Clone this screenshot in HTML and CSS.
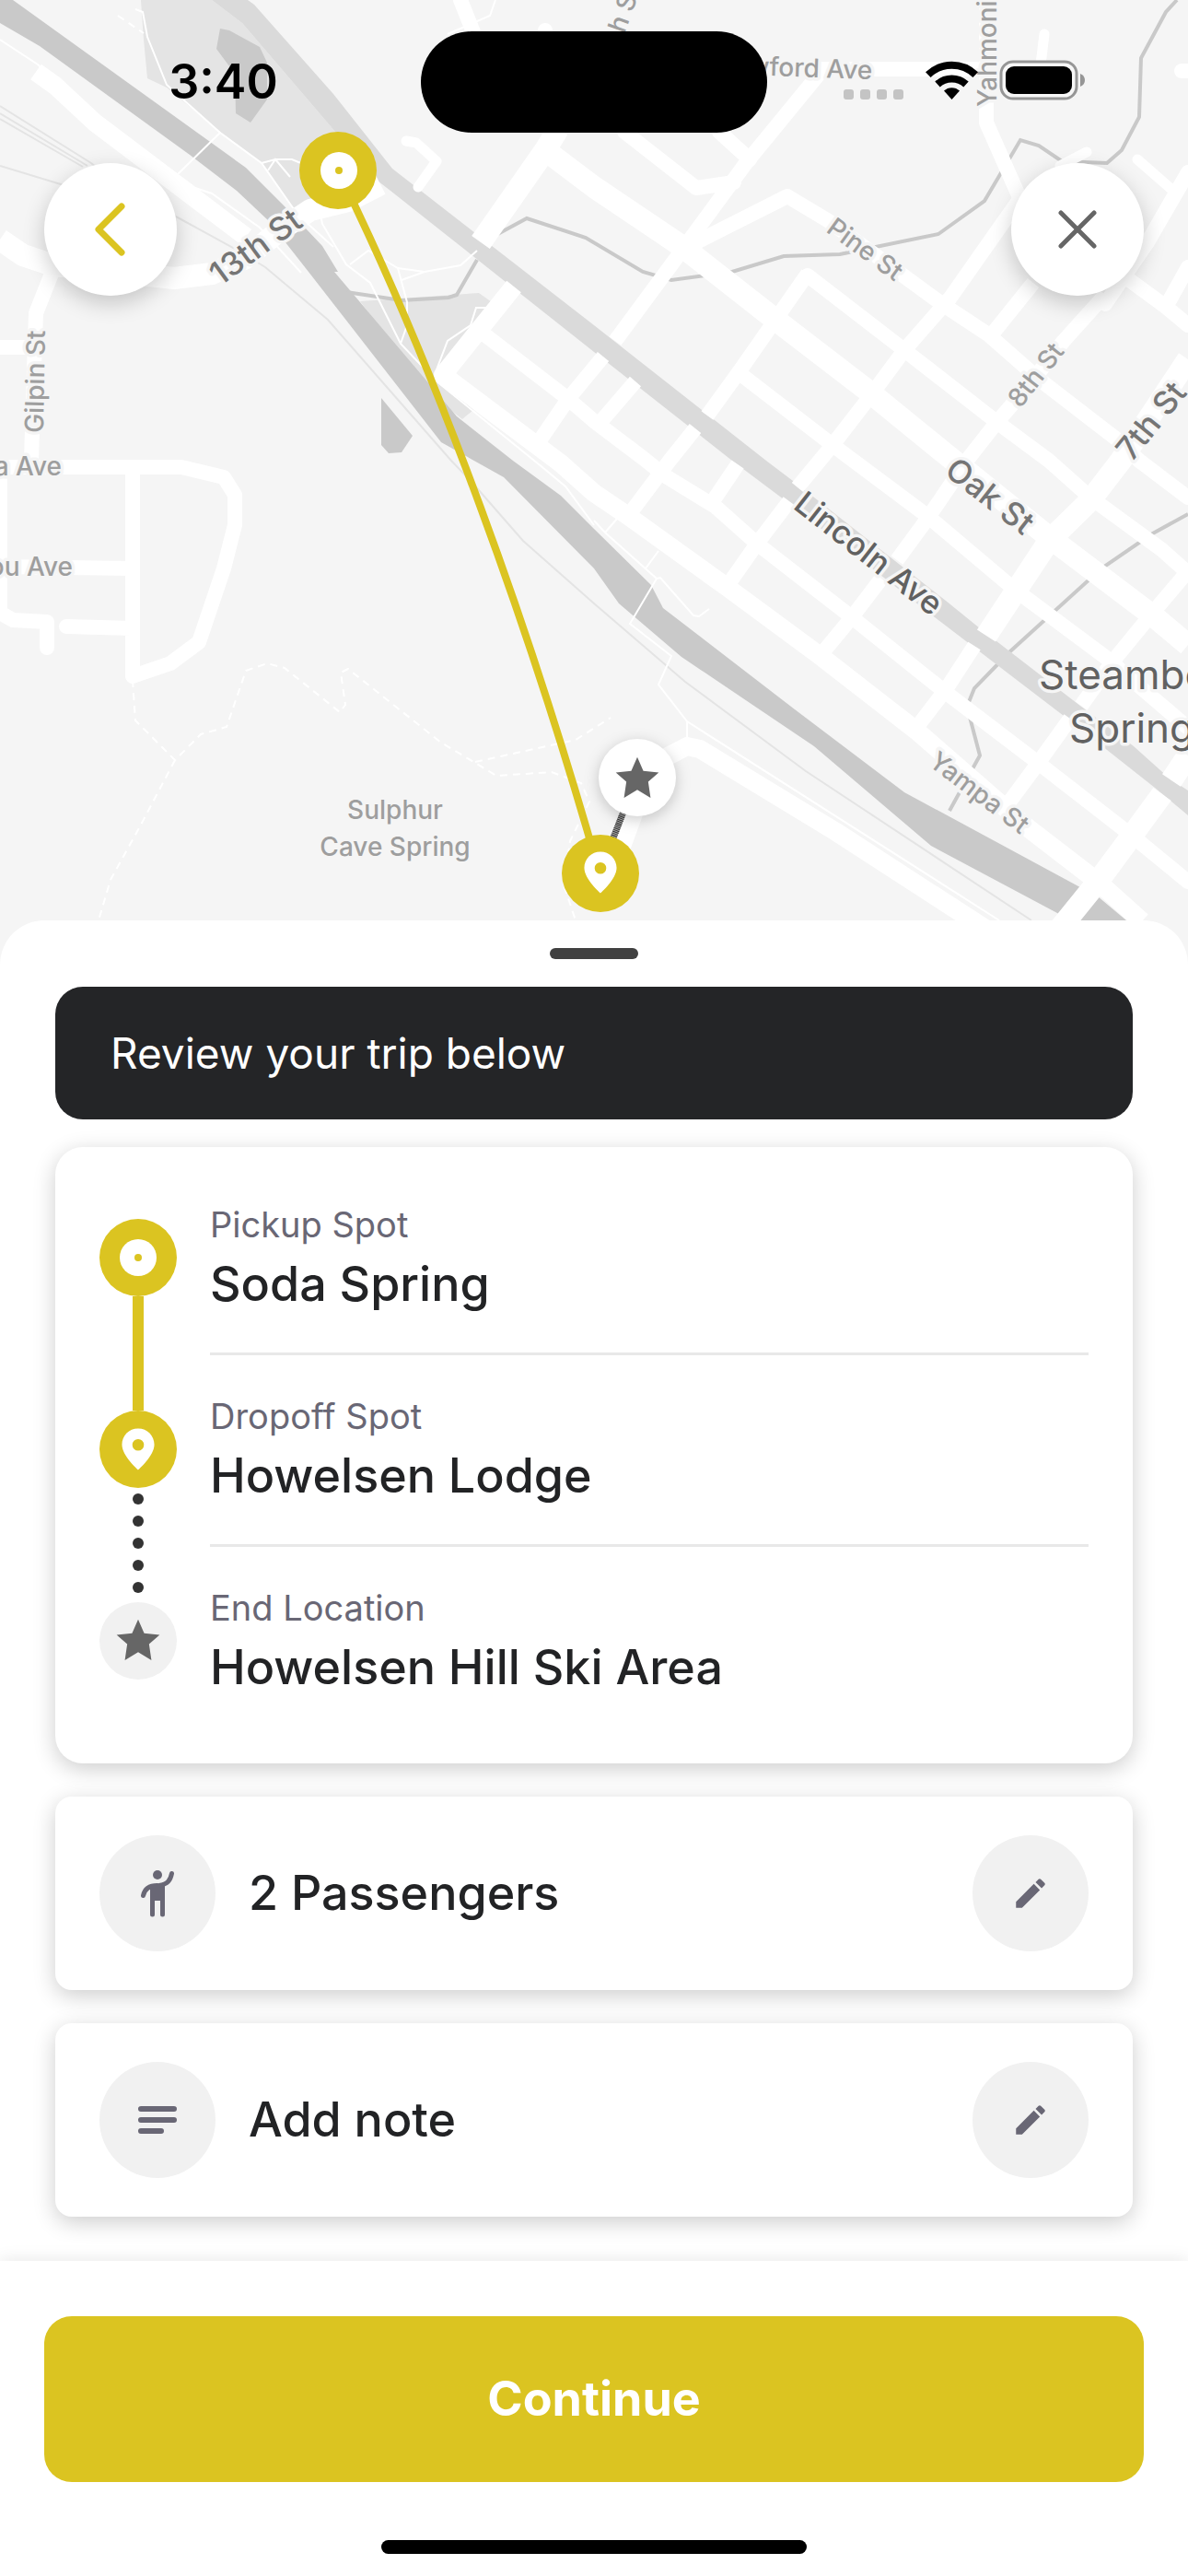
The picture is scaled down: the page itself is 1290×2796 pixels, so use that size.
FILE: index.html
```html
<!DOCTYPE html>
<html lang="en">
<head>
  <meta charset="UTF-8" />
  <meta name="viewport" content="width=device-width, initial-scale=1.0"/>
  <title>Review your trip</title>
  <link rel="stylesheet" href="styles.css">
</head>
<body>

  <!-- Shared icons -->
  <svg class="icon-defs" aria-hidden="true">
    <symbol id="icon-pin" viewBox="0 0 24 24">
      <path fill-rule="evenodd" d="M12 2C7.6 2 4.2 5.4 4.2 9.8 4.2 15.2 12 22 12 22s7.800-6.800 7.800-12.200C19.800 5.400 16.400 2 12 2zm0 5.100a2.800 2.800 0 1 1 0 5.600a2.800 2.800 0 0 1 0-5.600z"/>
    </symbol>
    <symbol id="icon-star" viewBox="0 0 24 24">
      <path d="M12 17.270L18.180 21l-1.100-7.500L22 9.240l-7.190-.8L12 2 9.190 8.440 2 9.240l4.920 4.260L5.820 21z"/>
    </symbol>
    <symbol id="icon-edit" viewBox="0 0 24 24">
      <path d="M3 17.250V21h3.750L17.810 9.940l-3.750-3.750L3 17.250zM20.710 7.040c.39-.39.39-1.020 0-1.410l-2.340-2.340c-.39-.39-1.020-.39-1.410 0l-1.830 1.830 3.750 3.750 1.830-1.830z"/>
    </symbol>
  </svg>

  <section class="map-area">
    <svg class="map" viewBox="0 0 1290 1047" preserveAspectRatio="xMidYMin slice" role="img" aria-label="Route map">
      <!-- parks -->
      <g fill="#e4e4e4">
        <path d="M153 0L156 43L160 85L181 95L239 143L284 177L319 227L341 217L385 180L364 143L263 25L230 0z"/>
        <path d="M391 327L520 318L537 330L490 393L485 417L514 445L502 455L470 430L435 385z"/>
      </g>
      <!-- water -->
      <g fill="#c9c9c9">
        <path d="M239 31L249 33L282 51L290 68V108L272 133L256 123L255 80L235 53z"/>
        <path d="M414 432L448 473L436 491L422 492L414 483z"/>
        <path d="M0 0H14L267 182L315 230L350 267L367 295H363L496 452L557 500L609 538L645 574L707 635L720 660L863 770L982 860L1171 962L1192 973L1260 1030L1210 1040L1148 991L1011 918L884 810L740 713L672 655L645 617L547 518L479 480L335 295L313 267L292 240L257 207L206 168L43 50L0 25z"/>
      </g>
      <g class="creek">
        <path d="M524 262L535 257L572 237L636 258L698 295L729 304L795 295L851 278L912 276L1019 254L1069 218L1108 152L1128 158L1153 175L1202 177L1218 163L1237 127L1239 63L1266 13L1278 0"/>
        <path d="M376 317L436 326L487 323L496 320L518 282"/>
        <path d="M1290 558L1250 580L1196 617L1097 707L1058 747L1050 767L1064 820L1031 880"/>
      </g>
      <g class="rail">
        <path d="M0 180L66 200L191 235L255 270L288 290L356 347L490 500L512 523L568 587L645 655L744 740L875 837L1120 999"/>
        <path d="M0 115L99 177L120 194M0 123L95 180M0 129L90 181"/>
      </g>
      <!-- highway -->
      <path fill="#dadada" d="M230 0L263 25L364 143L411 197L424 207L645 382L795 500L851 542L1011 667L1159 780L1254 855L1290 885V858L1270 845L1231 810L1169 763L1064 682L1027 652L865 525L832 500L645 353L426 183L362 102L276 5L269 0z"/>
      <!-- trails -->
      <g class="trail">
        <path d="M147 10L155 13L160 40L181 92L239 144L284 177L319 227M239 144L189 193"/>
        <path d="M0 43L41 70L82 108L193 190L212 204L230 210L282 247L327 296"/>
        <path d="M284 177L299 173H317L329 178M291 185L299 173L315 192"/>
        <path d="M348 233L350 243L376 287L402 307L435 373L473 413L590 508L614 528L645 570M331 240L362 268M380 287L400 272L432 291L461 295L500 288L518 272M461 295L436 304M432 291L442 328V353L435 373M537 334H517L511 353L486 370L473 404"/>
        <path d="M645 565L657 578L713 628L684 677L729 712L715 743L746 783V803M670 563L657 578M713 628L717 627L753 668L759 669L770 661M715 598L701 617M746 783L1085 999M486 37L532 17L538 0"/>
      </g>
      <g class="trail trail-dashed">
        <path d="M144 738L147 782L190 825L218 797L246 789L267 728L290 720L309 725L369 773L375 765L370 730L378 726L479 806L516 828L539 842L599 838L631 850L640 870L619 913L612 960L625 999"/>
        <path d="M190 825L152 897L120 955L107 999M516 827L625 803L663 779M128 17L156 36"/>
      </g>
      <!-- side streets -->
      <g class="road">
        <path d="M58 292L39 340L37 400L34 500M0 377H30M0 507H197L243 518L255 537V570L243 617L216 697L185 720L144 734V507M0 615L144 617M72 680L144 682M0 520V665L14 673L51 675V703"/>
        <path class="road-slim" d="M441 153L452 155L474 175L454 203"/>
        <path class="road-slim" d="M1134 37L1130 70M1180 165L1151 180M1235 173L1274 207"/>
        <path d="M500 0L514 35M592 33V40M678 143L756 204L797 198M781 143L814 173M748 267L855 213L900 240L982 300L1023 330L1073 363L1130 413L1213 477L1237 500L1290 540"/>
        <path d="M892 75H1060M1071 0V133L1106 212M1283 77H1290M1221 300L1266 333L1290 353M1290 187L1246 263L1200 330M1290 290L1266 333"/>
        <path d="M877 299L982 380L1081 457L1139 500L1184 540L1262 597L1290 622"/>
        <path d="M808 409L904 483L1007 560L1102 640L1200 713L1290 790"/>
        <path d="M526 363L617 433L645 457L698 497L723 517L777 550L822 590L925 670L1025 750L1126 827L1229 907L1290 957"/>
        <path stroke-linecap="butt" d="M655 387L617 433L580 487M892 77L810 177L744 267L668 370M690 414L653 457M877 297L842 347L805 400L768 451M755 465L727 500L682 560M801 504L772 547M1110 212L1032 323L982 380L945 430L904 483L866 529M857 544L822 590L789 637M1122 307L1077 363"/>
        <path stroke-linecap="butt" d="M1200 320L1155 370L1118 417L1081 460L1052 497L1007 563L974 608M957 628L925 670L892 710M1058 701L1028 747L995 790M1290 620L1250 667L1209 717L1174 766M1162 780L1126 830L1089 880"/>
      </g>
      <!-- main streets -->
      <g class="road road-wide">
        <path d="M39 78L60 93L103 133L152 170L214 217L267 257"/>
        <path d="M558 311L481 407L609 503L645 535L682 560L789 637L892 713L995 793L1118 900L1192 957L1240 1000"/>
        <path d="M660 960L700 850L723 822L746 810L760 813L908 903L1073 1010"/>
      </g>
      <g class="road road-main">
        <path d="M0 260L25 277L58 288L189 302L230 297L267 280L304 250L337 228L378 218L413 200"/>
        <path d="M522 263L592 163L645 203L740 267L842 347L941 423L1027 493L1139 583L1254 670L1290 700M592 163L606 140"/>
        <path d="M1290 390L1217 500L1184 543L1139 587L1102 643L1071 690M1290 820L1272 847M1262 862L1229 907L1192 957L1145 1015"/>
      </g>

      <!-- labels -->
      <g class="label label-small">
        <text transform="translate(47 470) rotate(-89)">Gilpin St</text>
        <text x="67" y="516" text-anchor="end">a Ave</text>
        <text x="79" y="625" text-anchor="end">ou Ave</text>
        <text transform="translate(678 37) rotate(-70)">h St</text>
        <text transform="translate(947 86) rotate(2)" text-anchor="end">Crawford Ave</text>
        <text transform="translate(1082 116) rotate(-90)">Yahmonite</text>
        <text transform="translate(896 251) rotate(36)">Pine St</text>
        <text transform="translate(1108 444) rotate(-52)">8th St</text>
        <text transform="translate(1007 830) rotate(37)">Yampa St</text>
        <text x="429" y="889" text-anchor="middle">Sulphur</text>
        <text x="429" y="929" text-anchor="middle">Cave Spring</text>
      </g>
      <g class="label label-medium">
        <text transform="translate(239 311) rotate(-36)">13th St</text>
        <text transform="translate(1229 502) rotate(-51)">7th St</text>
        <text transform="translate(1024 514) rotate(38)">Oak St</text>
        <text class="label-dark" transform="translate(860 551) rotate(38)">Lincoln Ave</text>
      </g>
      <g class="label label-large">
        <text x="1128" y="748">Steamboat</text>
        <text x="1161" y="806">Springs</text>
      </g>

      <!-- route -->
      <path d="M691 845L651 948" fill="none" stroke="#aaa" stroke-width="7"/>
      <path d="M691 845L651 948" fill="none" stroke="#333" stroke-width="7" stroke-dasharray="1 1"/>
      <path d="M367 185C475 405 575 680 651 948" fill="none" stroke="#dbc421" stroke-width="8"/>
      <circle cx="367" cy="185" r="42" fill="#dbc421"/>
      <circle cx="368" cy="185" r="20" fill="#fff"/>
      <circle cx="368" cy="185" r="4" fill="#dbc421"/>
      <circle class="stop-shadow" cx="692" cy="844" r="42" fill="#fff"/>
      <use href="#icon-star" x="664" y="817" width="56" height="56" fill="#666"/>
      <circle cx="652" cy="948" r="42" fill="#dbc421"/>
      <use href="#icon-pin" x="625" y="920" width="54" height="54" fill="#fff"/>
    </svg>

    <div class="status-bar">
      <div class="status-time">3:40</div>
      <div class="island"></div>
      <div class="status-icons">
        <svg width="66" height="12" viewBox="0 0 66 12" fill="#c4c4c4" class="signal">
          <rect width="11" height="11" rx="3"/><rect x="18" width="11" height="11" rx="3"/><rect x="36" width="11" height="11" rx="3"/><rect x="54" width="11" height="11" rx="3"/>
        </svg>
        <svg width="57" height="42" viewBox="0 0 57 42">
          <path d="M28.500 42L20 32.500a12.500 12.500 0 0 1 17 0z"/>
          <path d="M13 25.500a23 23 0 0 1 31 0" fill="none" stroke="#000" stroke-width="8"/>
          <path d="M2.800 15.200a37 37 0 0 1 51.400 0" fill="none" stroke="#000" stroke-width="8"/>
        </svg>
        <svg width="94" height="44" viewBox="0 0 94 44">
          <rect x="2" y="2" width="82" height="40" rx="13" fill="#f7f7f7" stroke="#969696" stroke-width="3"/>
          <rect x="7" y="7" width="72" height="30" rx="9"/>
          <path d="M88 15q5 2 5 7t-5 7z" fill="#969696"/>
        </svg>
      </div>
    </div>

    <div class="map-controls">
      <button class="map-button" aria-label="Back">
        <svg width="60" height="60" viewBox="0 0 60 60" fill="none" stroke="#dbc421" stroke-width="7" stroke-linecap="round" stroke-linejoin="round">
          <path d="M42 5L17 30L42 55"/>
        </svg>
      </button>
      <button class="map-button" aria-label="Close">
        <svg width="48" height="48" viewBox="0 0 48 48" fill="none" stroke="#666" stroke-width="5" stroke-linecap="round">
          <path d="M6 6L42 42M42 6L6 42"/>
        </svg>
      </button>
    </div>
  </section>

  <main class="sheet">
    <div class="handle"></div>
    <h1 class="banner">Review your trip below</h1>

    <section class="card trip">
      <div class="trip-rail">
        <span class="stop stop-active">
          <svg width="42" height="42" viewBox="0 0 42 42"><circle cx="21" cy="21" r="20" fill="#fff"/><circle cx="21" cy="21" r="4" fill="#dbc421"/></svg>
        </span>
        <span class="rail-line"></span>
        <span class="stop stop-active">
          <svg width="54" height="54" fill="#fff"><use href="#icon-pin"/></svg>
        </span>
        <span class="rail-dots"><i></i><i></i><i></i><i></i><i></i></span>
        <span class="stop">
          <svg width="56" height="56" fill="#666"><use href="#icon-star"/></svg>
        </span>
      </div>
      <dl class="trip-list">
        <div class="trip-item">
          <dt>Pickup Spot</dt>
          <dd>Soda Spring</dd>
        </div>
        <div class="trip-item">
          <dt>Dropoff Spot</dt>
          <dd>Howelsen Lodge</dd>
        </div>
        <div class="trip-item">
          <dt>End Location</dt>
          <dd>Howelsen Hill Ski Area</dd>
        </div>
      </dl>
    </section>

    <section class="card option">
      <span class="option-icon">
        <svg width="54" height="54" viewBox="0 0 54 54" fill="#696775">
          <circle cx="27" cy="7" r="5"/>
          <path d="M19 19h16v31a2.500 2.500 0 0 1-5 0V35h-6v15a2.500 2.500 0 0 1-5 0z"/>
          <path d="M27 18.500C18 18.500 13 22 11.500 29.500M29 18.500C38 17 41 13 42.500 5.500" fill="none" stroke="#696775" stroke-width="5" stroke-linecap="round"/>
        </svg>
      </span>
      <span class="option-text">2 Passengers</span>
      <button class="option-icon" aria-label="Edit passengers">
        <svg width="42" height="42" fill="#696775"><use href="#icon-edit"/></svg>
      </button>
    </section>

    <section class="card option">
      <span class="option-icon">
        <svg width="54" height="54" viewBox="0 0 54 54" fill="none" stroke="#696775" stroke-width="6" stroke-linecap="round">
          <path d="M9 15H45M9 27H45M9 39H31"/>
        </svg>
      </span>
      <span class="option-text">Add note</span>
      <button class="option-icon" aria-label="Edit note">
        <svg width="42" height="42" fill="#696775"><use href="#icon-edit"/></svg>
      </button>
    </section>
  </main>

  <footer class="footer">
    <button class="continue-button">Continue</button>
    <div class="home-indicator"></div>
  </footer>

</body>
</html>
```
FILE: styles.css
```css
:root {
  --font-sans: 'Inter', 'Roboto', sans-serif;
  --accent: #dbc421;
  --text-color: #222325;
  --muted: #696775;
  --dark: #242527;
  --circle: #f1f1f1;
  --card-shadow: 0 6px 24px rgba(0, 0, 0, 0.2);
}

* {
  box-sizing: border-box;
}

body {
  margin: 0;
  min-height: 100vh;
  display: flex;
  flex-direction: column;
  font-family: var(--font-sans);
  color: var(--text-color);
  background-color: #fff;
}

button {
  border: none;
  padding: 0;
  font-family: inherit;
  cursor: pointer;
}

.icon-defs {
  position: absolute;
  width: 0;
  height: 0;
}

/* Map */
.map-area {
  position: relative;
  height: 1047px;
  overflow: hidden;
  background-color: #f5f5f5;
}

.map {
  display: block;
  width: 100%;
  height: 100%;
}

.road {
  fill: none;
  stroke: #fff;
  stroke-width: 16px;
  stroke-linecap: round;
  stroke-linejoin: round;
}

.road-slim {
  stroke-width: 11px;
}

.road-wide {
  stroke-width: 20px;
  stroke-linecap: butt;
}

.road-main {
  stroke-width: 24px;
  stroke-linecap: butt;
}

.creek {
  fill: none;
  stroke: #c9c9c9;
  stroke-width: 4px;
}

.rail {
  fill: none;
  stroke: #e4e4e4;
  stroke-width: 2px;
}

.trail {
  fill: none;
  stroke: #fff;
  stroke-width: 2px;
}

.trail-dashed {
  stroke-dasharray: 8 6;
}

.label {
  paint-order: stroke;
  stroke: #f5f5f5;
  stroke-width: 7px;
  stroke-linejoin: round;
}

.label-small {
  font-size: 28px;
  font-weight: 500;
  fill: #9e9e9e;
}

.label-medium {
  font-size: 35px;
  font-weight: 500;
  fill: #757575;
}

.label-dark {
  fill: #616161;
}

.label-large {
  font-size: 44px;
  fill: #616161;
}

.stop-shadow {
  filter: drop-shadow(0 4px 8px rgba(0, 0, 0, 0.2));
}

/* Status bar */
.status-bar {
  position: absolute;
  top: 34px;
  left: 0;
  right: 0;
  display: grid;
  grid-template-columns: 1fr 376px 1fr;
  align-items: center;
}

.status-time {
  padding-left: 28px;
  font-size: 52px;
  font-weight: 600;
  line-height: 60px;
  text-align: center;
  color: #000;
}

.island {
  height: 110px;
  border-radius: 55px;
  background-color: #000;
}

.status-icons {
  display: flex;
  align-items: center;
  justify-content: center;
  gap: 23px;
  padding-right: 28px;
  padding-bottom: 4px;
}

.signal {
  align-self: flex-end;
}

.map-controls {
  position: absolute;
  top: 177px;
  left: 48px;
  right: 48px;
  display: flex;
  justify-content: space-between;
}

.map-button {
  width: 144px;
  height: 144px;
  display: flex;
  align-items: center;
  justify-content: center;
  border-radius: 50%;
  background-color: #fff;
  box-shadow: 0 8px 24px rgba(0, 0, 0, 0.2);
}

/* Bottom sheet */
.sheet {
  position: relative;
  flex: 1;
  margin-top: -48px;
  padding: 30px 60px 48px;
  display: flex;
  flex-direction: column;
  border-radius: 48px 48px 0 0;
  background-color: #fff;
}

.handle {
  align-self: center;
  width: 96px;
  height: 12px;
  border-radius: 6px;
  background-color: #404040;
}

.banner {
  margin: 30px 0;
  padding: 42px 60px;
  border-radius: 30px;
  background-color: var(--dark);
  color: #fff;
  font-size: 46px;
  font-weight: 400;
  line-height: 60px;
}

.card {
  padding: 0 48px;
  background-color: #fff;
  box-shadow: var(--card-shadow);
}

.trip {
  display: flex;
  gap: 36px;
  padding-top: 18px;
  padding-bottom: 27px;
  border-radius: 30px;
}

.trip-rail {
  display: flex;
  flex-direction: column;
  align-items: center;
  padding-top: 60px;
}

.stop {
  width: 84px;
  height: 84px;
  display: flex;
  align-items: center;
  justify-content: center;
  border-radius: 50%;
  background-color: var(--circle);
}

.stop-active {
  background-color: var(--accent);
}

.rail-line {
  width: 12px;
  height: 124px;
  background-color: var(--accent);
}

.rail-dots {
  height: 124px;
  padding: 6px 0 10px;
  display: flex;
  flex-direction: column;
  justify-content: space-between;
}

.rail-dots i {
  width: 12px;
  height: 12px;
  border-radius: 50%;
  background-color: #333;
}

.trip-list {
  flex: 1;
  margin: 0;
}

.trip-item {
  height: 208px;
  padding-top: 44px;
  border-bottom: 3px solid #e8e8e8;
}

.trip-item:last-child {
  border-bottom-color: transparent;
}

.trip-item dt {
  margin-bottom: 11px;
  color: var(--muted);
  font-size: 38px;
  line-height: 44px;
}

.trip-item dd {
  margin: 0;
  font-size: 52px;
  font-weight: 500;
  line-height: 64px;
}

.option {
  display: flex;
  align-items: center;
  gap: 36px;
  margin-top: 36px;
  padding-top: 42px;
  padding-bottom: 42px;
  border-radius: 18px;
}

.option-icon {
  width: 126px;
  height: 126px;
  flex-shrink: 0;
  display: flex;
  align-items: center;
  justify-content: center;
  border-radius: 50%;
  background-color: var(--circle);
}

.option-text {
  flex: 1;
  font-size: 52px;
  font-weight: 500;
  line-height: 64px;
}

/* Footer */
.footer {
  position: relative;
  padding: 60px 48px 24px;
  display: flex;
  flex-direction: column;
  align-items: center;
  background-color: #fff;
  box-shadow: 0 0 18px rgba(0, 0, 0, 0.1);
}

.continue-button {
  width: 100%;
  padding: 60px 0;
  border-radius: 30px;
  background-color: var(--accent);
  color: #fff;
  font-size: 52px;
  font-weight: 700;
  line-height: 60px;
}

.home-indicator {
  width: 462px;
  height: 15px;
  margin-top: 63px;
  border-radius: 8px;
  background-color: #000;
}
```
